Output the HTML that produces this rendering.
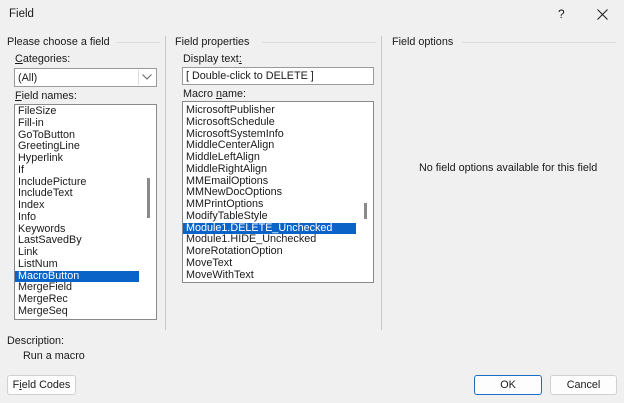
<!DOCTYPE html><html><head><style>
*{box-sizing:border-box}
body{margin:0;width:624px;height:403px;background:#f0f0f0;font-family:"Liberation Sans",sans-serif;font-size:10.8px;color:#1a1a1a;position:relative;overflow:hidden}
.a{position:absolute;white-space:nowrap}
.box{position:absolute;background:#fff;border:1px solid #8a8a8a}
.list div{height:11.75px;line-height:11.75px;padding-left:3px;white-space:nowrap}
.sel{background:#0a64c8;color:#fff}
.hl{position:absolute;height:1px;background:#dcdcdc}
.vl{position:absolute;width:1px;background:#c8c8c8;top:36px;height:294px}
.btn{position:absolute;background:#fdfdfd;border:1px solid #d0d0d0;border-radius:3px;text-align:center;line-height:18px}
</style></head><body>
<div class="a" style="left:9px;top:8px;font-size:11.5px">Field</div>
<div class="a" style="left:558px;top:7px;font-size:12px">?</div>
<svg class="a" style="left:597px;top:9px" width="11" height="11"><path d="M0.5 0.5L10.5 10.5M10.5 0.5L0.5 10.5" stroke="#222" stroke-width="1.1"/></svg>

<div class="a" style="left:7px;top:36px">Please choose a field</div>
<div class="hl" style="left:116px;top:42px;width:44px"></div>
<div class="vl" style="left:165px"></div>
<div class="a" style="left:175px;top:36px">Field properties</div>
<div class="hl" style="left:262px;top:42px;width:114px"></div>
<div class="vl" style="left:381px"></div>
<div class="a" style="left:392px;top:36px">Field options</div>
<div class="hl" style="left:462px;top:42px;width:154px"></div>

<div class="a" style="left:15px;top:53px"><u>C</u>ategories:</div>
<div class="box" style="left:14px;top:68px;width:143px;height:19px;border-color:#9a9a9a"><span class="a" style="left:3px;top:3px">(All)</span><div class="a" style="left:123px;top:1px;width:1px;height:15px;background:#ddd"></div><svg class="a" style="left:127px;top:5px" width="10" height="6"><path d="M0.5 0.5L5 5L9.5 0.5" fill="none" stroke="#666"/></svg></div>
<div class="a" style="left:15px;top:90px"><u>F</u>ield names:</div>
<div class="box list" style="left:14px;top:104px;width:143px;height:216px;padding-top:1px">
<div>FileSize</div><div>Fill-in</div><div>GoToButton</div><div>GreetingLine</div><div>Hyperlink</div><div>If</div><div>IncludePicture</div><div>IncludeText</div><div>Index</div><div>Info</div><div>Keywords</div><div>LastSavedBy</div><div>Link</div><div>ListNum</div><div class="sel" style="width:124px">MacroButton</div><div>MergeField</div><div>MergeRec</div><div>MergeSeq</div>
<div class="a" style="left:132px;top:73px;width:2px;height:40px;background:#8a8a8a"></div>
</div>

<div class="a" style="left:183px;top:53px">Display text<u>:</u></div>
<div class="box" style="left:182px;top:67px;width:192px;height:18px;border-color:#9a9a9a"><span class="a" style="left:3px;top:2px">[ Double-click to DELETE ]</span></div>
<div class="a" style="left:183px;top:88px">Macro <u>n</u>ame:</div>
<div class="box list" style="left:182px;top:101px;width:192px;height:182px;padding-top:3px">
<div>MicrosoftPublisher</div><div>MicrosoftSchedule</div><div>MicrosoftSystemInfo</div><div>MiddleCenterAlign</div><div>MiddleLeftAlign</div><div>MiddleRightAlign</div><div>MMEmailOptions</div><div>MMNewDocOptions</div><div>MMPrintOptions</div><div>ModifyTableStyle</div><div class="sel" style="width:173px">Module1.DELETE_Unchecked</div><div>Module1.HIDE_Unchecked</div><div>MoreRotationOption</div><div>MoveText</div><div>MoveWithText</div>
<div class="a" style="left:181px;top:101px;width:2px;height:16px;background:#8a8a8a"></div>
</div>

<div class="a" style="left:419px;top:162px">No field options available for this field</div>

<div class="a" style="left:7px;top:335px">Description:</div>
<div class="a" style="left:23px;top:350px">Run a macro</div>
<div class="btn" style="left:7px;top:375px;width:69px;height:20px">F<u>i</u>eld Codes</div>
<div class="btn" style="left:474px;top:375px;width:68px;height:20px;border-color:#1a6fc4">OK</div>
<div class="btn" style="left:550px;top:375px;width:67px;height:20px">Cancel</div>
</body></html>
